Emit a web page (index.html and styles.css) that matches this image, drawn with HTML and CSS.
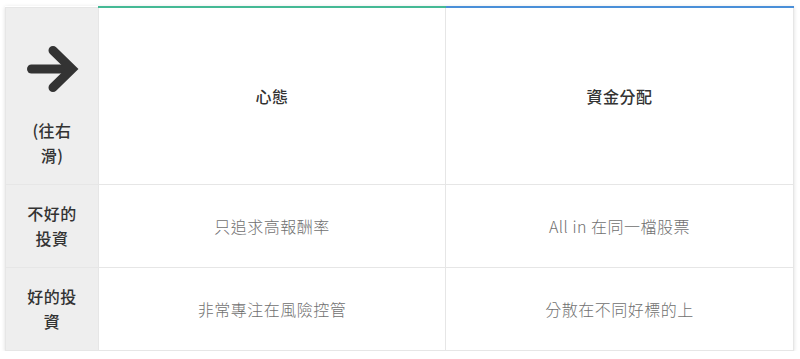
FILE: index.html
```html
<!DOCTYPE html>
<html lang="zh-Hant">
<head>
<meta charset="utf-8">
<title>投資比較</title>
<link rel="stylesheet" href="styles.css">
</head>
<body>
<div class="wrap">
  <table class="cmp">
    <colgroup>
      <col class="c1">
      <col class="c2">
      <col class="c3">
    </colgroup>
    <thead>
      <tr class="head">
        <th class="side side-head">
          <div class="side-inner">
            <svg class="arrow" width="60" height="56" viewBox="0 0 60 56" aria-hidden="true">
              <path d="M9.5 28 H47" fill="none" stroke="#333" stroke-width="9" stroke-linecap="round"/>
              <path d="M31 9.5 L50 28 L31 46.5" fill="none" stroke="#333" stroke-width="9" stroke-linecap="round" stroke-linejoin="miter"/>
            </svg>
            <span class="hint">(往右滑)</span>
          </div>
        </th>
        <th class="col green">心態</th>
        <th class="col blue">資金分配</th>
      </tr>
    </thead>
    <tbody>
      <tr class="row">
        <th class="side">不好的投資</th>
        <td>只追求高報酬率</td>
        <td>All in 在同一檔股票</td>
      </tr>
      <tr class="row">
        <th class="side">好的投資</th>
        <td>非常專注在風險控管</td>
        <td>分散在不同好標的上</td>
      </tr>
    </tbody>
  </table>
</div>
</body>
</html>
```

FILE: styles.css
```css
html, body {
  margin: 0;
  padding: 0;
  background: #ffffff;
}

body {
  font-family: "Noto Sans CJK TC", "Noto Sans", "Liberation Sans", sans-serif;
  color: #333;
}

.wrap {
  padding: 6px 7px 0 5px;
}

.cmp {
  width: 788px;
  border-collapse: collapse;
  table-layout: fixed;
  box-shadow: 0 1px 4px rgba(0, 0, 0, 0.14);
  background: #fff;
}

.c1 { width: 93px; }
.c2 { width: 347px; }
.c3 { width: 348px; }

.cmp th,
.cmp td {
  border: 1px solid #e6e6e6;
  text-align: center;
  vertical-align: middle;
  font-size: 16px;
  line-height: 25px;
  letter-spacing: 0.5px;
}

.head th {
  height: 176px;
  padding: 0;
}

.row th,
.row td {
  height: 82px;
  padding: 0;
}

.side {
  background: #eeeeee;
  font-weight: 500;
  color: #333;
  padding: 0 19px !important;
}

.side-inner {
  display: flex;
  flex-direction: column;
  align-items: center;
  padding-top: 18px;
}

.arrow {
  display: block;
  margin-bottom: 21px;
}

.hint {
  display: block;
}

.col {
  font-weight: 500;
  color: #333;
}

.green { border-top: 2px solid #45b995 !important; }
.blue { border-top: 2px solid #4a8fd8 !important; }

.row td {
  font-weight: 300;
  color: #707070;
}
```
